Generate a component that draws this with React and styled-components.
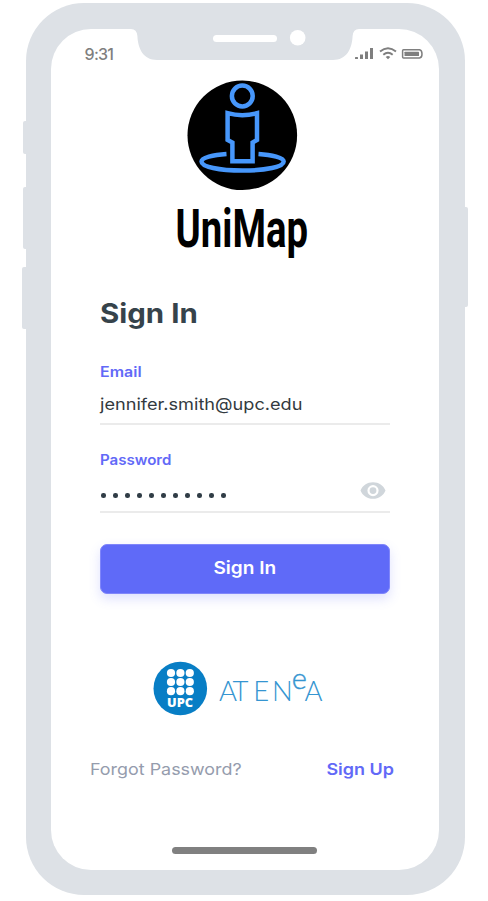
import React from "react";
import styled, { createGlobalStyle } from "styled-components";

const GlobalStyle = createGlobalStyle`
  *, *::before, *::after { box-sizing: border-box; }
  body { margin: 0; background: #fff; font-family: Inter, "Noto Sans", sans-serif; }
`;

const Stage = styled.main`
  width: 488px;
  height: 901px;
  padding: 3px 0 0 26px;
  overflow: hidden;
`;

const Phone = styled.div`
  position: relative;
  width: 438.5px;
  height: 891.5px;
  padding: 25.7px 25.3px 24.5px 24.5px;
  border-radius: 58px;
  background: #dde1e6;
`;

const SideButton = styled.span`
  position: absolute;
  top: ${(p) => p.$top}px;
  ${(p) => (p.$right ? "right" : "left")}: -${(p) => p.$depth}px;
  width: 8px;
  height: ${(p) => p.$height}px;
  border-radius: 2px;
  background: #dde1e6;
`;

const Screen = styled.div`
  display: flex;
  flex-direction: column;
  height: 100%;
  border-radius: 40px;
  background: #fff;
`;

const Notch = styled.svg`
  position: absolute;
  left: 98px;
  top: 20px;
`;

const StatusBar = styled.header`
  display: flex;
  flex: none;
  align-items: center;
  justify-content: space-between;
  height: 50px;
  padding: 0 15px 0 34px;
`;

const Time = styled.span`
  font-size: 16px;
  font-weight: 500;
  letter-spacing: -0.7px;
  color: #7f7f7f;
`;

const AppLogo = styled.svg`
  flex: none;
  margin-left: 114.5px;
`;

const Wide = styled.span`
  display: inline-block;
  transform: scaleX(${(p) => p.$by});
  transform-origin: ${(p) => p.$from || "left"};
`;

const Form = styled.form`
  display: flex;
  flex-direction: column;
  margin: 37px 49px 0 49.5px;
`;

const Title = styled.h1`
  margin: 0;
  font-size: 27px;
  line-height: 34px;
  font-weight: 700;
  color: #36434b;
`;

const Field = styled.div`
  display: flex;
  flex-direction: column;
  margin-top: ${(p) => p.$gap}px;
`;

const Label = styled.label`
  font-size: 14px;
  line-height: 20px;
  font-weight: 600;
  color: #6269f7;
`;

const Value = styled.div`
  box-sizing: content-box;
  display: flex;
  align-items: center;
  justify-content: space-between;
  height: 24px;
  margin-top: 10px;
  padding-bottom: 7px;
  border-bottom: 2px solid #ebebeb;
  font-size: 16.5px;
  color: #333a40;
`;

const Dots = styled.span`
  display: flex;
  gap: 7.5px;
  padding: 8px 0 0 1px;
`;

const Dot = styled.i`
  width: 4.5px;
  height: 4.5px;
  border-radius: 50%;
  background: #303d46;
`;

const Eye = styled.svg`
  margin-right: 2px;
`;

const SubmitButton = styled.button`
  height: 50px;
  margin: 31px 0 0;
  padding: 0 0 3px;
  border: 1px solid #8086fa;
  border-radius: 7px;
  background: #5f6af8;
  box-shadow: 0 5px 12px rgba(95, 106, 248, 0.2);
  color: #fff;
  font: 600 17.5px Inter, sans-serif;
`;

const Partners = styled.svg`
  flex: none;
  margin: 61px 0 0 89.5px;
`;

const Footer = styled.footer`
  display: flex;
  justify-content: space-between;
  margin: 33px 45px 0 39px;
  line-height: 24px;
`;

const FooterLink = styled.a`
  font-size: 16.5px;
  font-weight: ${(p) => (p.$strong ? 600 : 400)};
  color: ${(p) => (p.$strong ? "#6269f7" : "#959cad")};
`;

const HomeBar = styled.div`
  align-self: center;
  flex: none;
  width: 145px;
  height: 7px;
  margin-top: 66px;
  border-radius: 4px;
  background: #808080;
`;

function StatusIcons() {
  return (
    <svg width="70" height="16" viewBox="354 46 70 16" fill="none">
      <g fill="#7f7f7f">
        <rect x="355" y="57" width="3" height="2" rx=".5" />
        <rect x="360" y="54.5" width="3" height="4.5" />
        <rect x="365" y="51.5" width="3" height="7.5" />
        <rect x="370" y="48" width="3" height="11" />
      </g>
      <g stroke="#7f7f7f" strokeWidth="1.9">
        <path d="M380 51.6Q388 45 396 51.6" />
        <path d="M383.3 54.8Q388 50.8 392.7 54.8" />
      </g>
      <path d="M385.7 57Q388 55.2 390.3 57L388 59.3Z" fill="#7f7f7f" />
      <path d="M403.5 49.8H419.5Q422 50.2 422 53.9Q422 57.6 419.5 58H403.5Q402.6 58 402.6 57V50.8Q402.6 49.8 403.5 49.8Z" stroke="#7f7f7f" strokeWidth="1.5" />
      <rect x="404.5" y="51.7" width="14.5" height="4.4" rx=".6" fill="#7f7f7f" />
    </svg>
  );
}

function UniMapLogo() {
  return (
    <AppLogo width="155" height="181" viewBox="165 79 155 181" overflow="visible">
      <circle cx="242.3" cy="135.3" r="54.8" fill="#000" />
      <g fill="none" stroke="#4797fb" strokeWidth="4.5">
        <circle cx="242.3" cy="96" r="10.4" />
        <path d="M227.6 113.2Q242.3 117.2 257 113.2V140L252.6 142.5V161.3H232.4V142.5L227.6 140Z" />
        <path d="M226.5 154C213 154.8 201.5 157.8 201.5 161.5C201.5 166.8 219 170.6 242.5 170.6S283.7 166.8 283.7 161.5C283.7 157.8 272 154.8 258.5 154" />
      </g>
      <text x="175.5" y="247" fontFamily="Roboto, sans-serif" fontSize="53" fontWeight="700" textLength="132.5" lengthAdjust="spacingAndGlyphs">UniMap</text>
    </AppLogo>
  );
}

function PartnerLogos() {
  const rows = [673, 682, 691.2];
  const columns = [171, 180.4, 189.8];
  return (
    <Partners width="200" height="69" viewBox="140 655 200 69">
      <circle cx="180.3" cy="688.5" r="26.8" fill="#087ec5" />
      {rows.map((y) => columns.map((x) => <circle key={`${x}-${y}`} cx={x} cy={y} r="4.1" fill="#fff" />))}
      <text x="167" y="707" fontFamily="Open Sans, sans-serif" fontSize="12" fontWeight="800" fill="#fff" textLength="26" lengthAdjust="spacingAndGlyphs">UPC</text>
      <g fill="#3595d1" fontFamily="Lato, sans-serif" fontWeight="300" fontSize="27.5">
        <text y="701" x="219 232.4 253.2 272">ATEN</text>
        <text x="291.8" y="688.5" fontSize="29" stroke="#3595d1" strokeWidth=".4">e</text>
        <text x="304.5" y="701">A</text>
      </g>
    </Partners>
  );
}

export default function App() {
  return (
    <Stage>
      <GlobalStyle />
      <Phone>
        <SideButton $top={118} $height={33} $depth={3} />
        <SideButton $top={184} $height={61.5} $depth={3} />
        <SideButton $top={264} $height={62} $depth={4.3} />
        <SideButton $right $top={204} $height={99.5} $depth={3.5} />
        <Notch width="244" height="38" viewBox="124 23 244 38">
          <path d="M124 29H131Q136.8 29 137.4 36C138 49 143.5 60 157 60H333C346.5 60 352 49 352.6 36Q353.2 29 359 29H368V23H124Z" fill="#dde1e6" />
          <rect x="213" y="35" width="64" height="7" rx="3.5" fill="#fff" />
          <circle cx="297.7" cy="37.8" r="7.8" fill="#fff" />
        </Notch>
        <Screen>
          <StatusBar>
            <Time>9:31</Time>
            <StatusIcons />
          </StatusBar>
          <UniMapLogo />
          <Form>
            <Title><Wide $by={1.09}>Sign In</Wide></Title>
            <Field $gap={31}>
              <Label><Wide $by={1.14}>Email</Wide></Label>
              <Value><Wide $by={1.1}>jennifer.smith@upc.edu</Wide></Value>
            </Field>
            <Field $gap={25}>
              <Label><Wide $by={1.075}>Password</Wide></Label>
              <Value>
                <Dots>
                  {Array.from({ length: 11 }, (_, i) => <Dot key={i} />)}
                </Dots>
                <Eye width="30" height="24" viewBox="0 0 30 24">
                  <path fillRule="evenodd" fill="#d0d6db" d="M2.5 10.5C4.5 5.5 9.2 2.3 15 2.3S25.5 5.5 27.5 10.5C25.5 15.6 20.8 18.8 15 18.8S4.5 15.6 2.5 10.5ZM15 5A5.6 5.6 0 1 0 15 16.2A5.6 5.6 0 1 0 15 5ZM15 7.2A3.4 3.4 0 1 1 15 14A3.4 3.4 0 1 1 15 7.2Z" />
                </Eye>
              </Value>
            </Field>
            <SubmitButton type="button"><Wide $by={1.09} $from="center">Sign In</Wide></SubmitButton>
          </Form>
          <PartnerLogos />
          <Footer>
            <FooterLink><Wide $by={1.085}>Forgot Password?</Wide></FooterLink>
            <FooterLink $strong><Wide $by={1.09} $from="right">Sign Up</Wide></FooterLink>
          </Footer>
          <HomeBar />
        </Screen>
      </Phone>
    </Stage>
  );
}
